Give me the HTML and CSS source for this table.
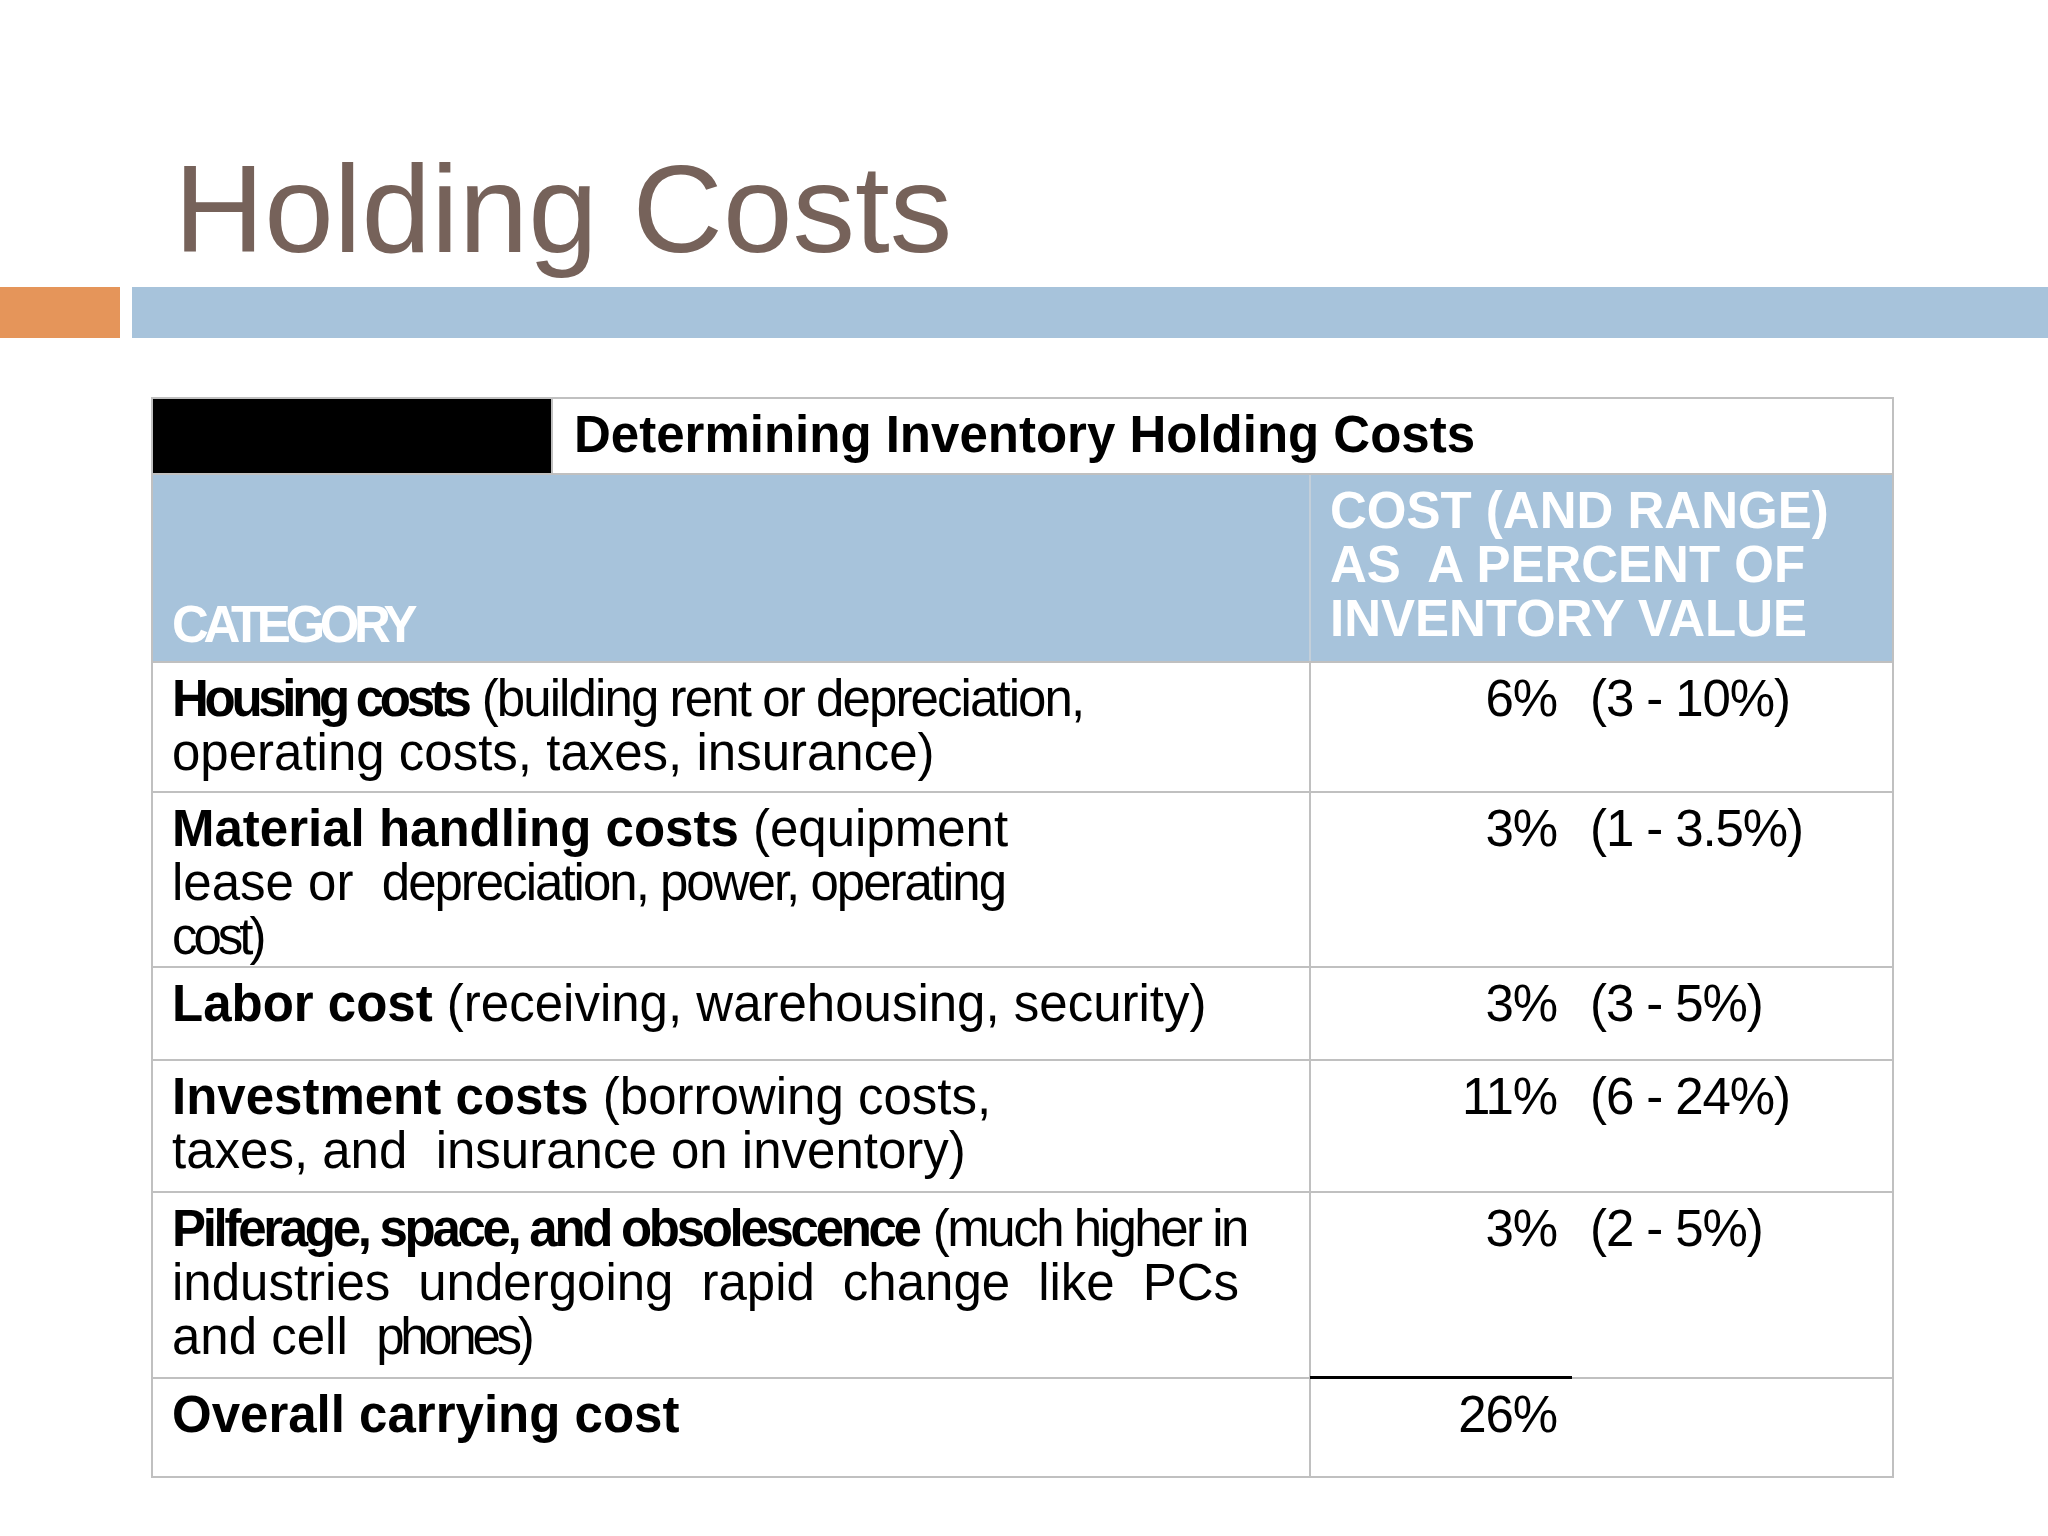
FILE: index.html
```html
<!DOCTYPE html>
<html lang="en">
<head>
<meta charset="utf-8">
<title>Holding Costs</title>
<link rel="stylesheet" href="styles.css">
</head>
<body>
<div class="slide">
  <h1 class="title">Holding Costs</h1>
  <div class="bars">
    <div class="bar-accent"></div>
    <div class="bar-main"></div>
  </div>
  <div class="table">
    <div class="row row-title">
      <div class="black-cell"></div>
      <div class="title-cell">Determining Inventory Holding Costs</div>
    </div>
    <div class="row row-head">
      <div class="c1 head-left"><span class="cat">CATEGORY</span></div>
      <div class="c2 head-right">COST (AND RANGE)<br>AS&nbsp; A PERCENT OF<br>INVENTORY VALUE</div>
    </div>
    <div class="row r1">
      <div class="c1">
        <span class="line"><b class="t-bold-tight">Housing costs</b> <span class="t-reg-tight">(building rent or depreciation,</span></span>
        <span class="line">operating costs, taxes, insurance)</span>
      </div>
      <div class="c2 val"><span class="pct">6%</span><span class="range">(3 - 10%)</span></div>
    </div>
    <div class="row r2">
      <div class="c1">
        <span class="line"><b>Material handling costs</b> (equipment</span>
        <span class="line">lease or&nbsp; <span class="t-dep">depreciation, power, operating</span></span>
        <span class="line t-cost">cost)</span>
      </div>
      <div class="c2 val"><span class="pct">3%</span><span class="range">(1 - 3.5%)</span></div>
    </div>
    <div class="row r3">
      <div class="c1">
        <span class="line"><b>Labor cost</b> (receiving, warehousing, security)</span>
      </div>
      <div class="c2 val"><span class="pct">3%</span><span class="range">(3 - 5%)</span></div>
    </div>
    <div class="row r4">
      <div class="c1">
        <span class="line"><b>Investment costs</b> (borrowing costs,</span>
        <span class="line">taxes, and&nbsp; insurance on inventory)</span>
      </div>
      <div class="c2 val"><span class="pct">11%</span><span class="range">(6 - 24%)</span></div>
    </div>
    <div class="row r5">
      <div class="c1">
        <span class="line"><b class="t-pilf-bold">Pilferage, space, and obsolescence</b> <span class="t-pilf-reg">(much higher in</span></span>
        <span class="line-just">industries undergoing rapid change like PCs</span>
        <span class="line">and cell&nbsp; <span class="t-phones">phones)</span></span>
      </div>
      <div class="c2 val"><span class="pct">3%</span><span class="range">(2 - 5%)</span></div>
    </div>
    <div class="row r6">
      <div class="c1">
        <span class="line"><b>Overall carrying cost</b></span>
      </div>
      <div class="c2 val total"><span class="pct">26%</span></div>
    </div>
  </div>
</div>
</body>
</html>
```
FILE: styles.css
```css
html, body {
  margin: 0;
  padding: 0;
  background: #ffffff;
}

.slide {
  width: 2048px;
  height: 1536px;
  background: #ffffff;
  font-family: "Liberation Sans", Arial, sans-serif;
  color: #000000;
  overflow: hidden;
}

.title {
  margin: 0;
  padding: 146px 0 0 174px;
  font-size: 125px;
  line-height: 125px;
  font-weight: normal;
  color: #76625a;
}

.bars {
  display: flex;
  gap: 12px;
  height: 51px;
  margin-top: 16px;
}

.bar-accent {
  width: 120px;
  background: #e5955a;
}

.bar-main {
  flex: 1;
  background: #a7c3db;
}

.table {
  box-sizing: border-box;
  width: 1743px;
  margin: 59px 0 0 151px;
  border: 2px solid #c0c0c0;
  font-size: 51px;
  line-height: 54px;
}

.row {
  box-sizing: border-box;
  display: flex;
  border-top: 2px solid #c0c0c0;
}

.row-title {
  border-top: none;
  height: 74px;
}

.black-cell {
  box-sizing: border-box;
  width: 400px;
  background: #000000;
  border-right: 2px solid #c0c0c0;
}

.title-cell {
  flex: 1;
  padding: 9px 0 0 21px;
  font-weight: bold;
  white-space: nowrap;
}

.c1 {
  box-sizing: border-box;
  width: 1158px;
  padding: 9px 70px 0 19px;
  border-right: 2px solid #c0c0c0;
}

.c2 {
  flex: 1;
  padding: 9px 0 0 19px;
  white-space: nowrap;
}

.row-head {
  height: 188px;
  background: #a7c3db;
  color: #ffffff;
  font-weight: bold;
}

.head-left {
  display: flex;
  flex-direction: column;
  justify-content: flex-end;
  padding-top: 0;
  padding-bottom: 9px;
  border-right-color: #c3cfda;
}

.cat {
  letter-spacing: -5.4px;
}

.r1 { height: 130px; }
.r2 { height: 175px; }
.r3 { height: 93px; }
.r4 { height: 132px; }
.r5 { height: 186px; }
.r6 { height: 99px; }

.line {
  display: block;
  white-space: nowrap;
}

.line-just {
  display: block;
  text-align: justify;
  text-align-last: justify;
}

.t-bold-tight { letter-spacing: -4.3px; }
.t-reg-tight { letter-spacing: -1.9px; }
.t-dep { letter-spacing: -2px; }
.t-cost { letter-spacing: -4px; }
.t-pilf-bold { letter-spacing: -3.3px; }
.t-pilf-reg { letter-spacing: -2.5px; }
.t-phones { letter-spacing: -4.3px; }

.val {
  letter-spacing: -1.1px;
}

.pct {
  display: inline-block;
  width: 227px;
  text-align: right;
}

.range {
  margin-left: 33px;
}

.total {
  position: relative;
}

.total::before {
  content: "";
  position: absolute;
  left: -1px;
  top: -3px;
  width: 262px;
  height: 3px;
  background: #000000;
}
```
